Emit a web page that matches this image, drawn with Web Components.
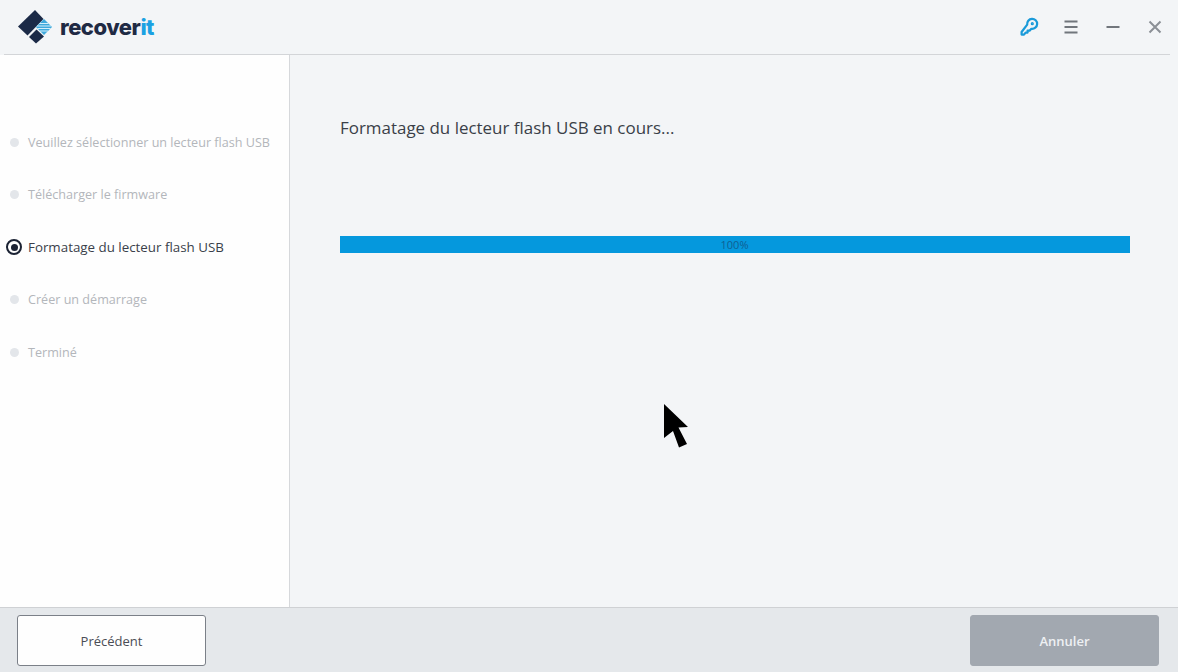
<!DOCTYPE html>
<html lang="fr">
<head>
<meta charset="utf-8">
<title>Recoverit</title>
<style>
    html, body { margin: 0; height: 100%; }
    body { font-family: "Open Sans", "Liberation Sans", sans-serif; overflow: hidden; }
</style>
</head>
<body>
<app-window>
    <app-header slot="header"></app-header>
    <step-list slot="side">
        <step-item>Veuillez sélectionner un lecteur flash USB</step-item>
        <step-item>Télécharger le firmware</step-item>
        <step-item active>Formatage du lecteur flash USB</step-item>
        <step-item>Créer un démarrage</step-item>
        <step-item>Terminé</step-item>
    </step-list>
    <progress-panel slot="main" title-text="Formatage du lecteur flash USB en cours..." value="100"></progress-panel>
    <app-footer slot="footer">
        <app-button slot="left">Précédent</app-button>
        <app-button slot="right" disabled>Annuler</app-button>
    </app-footer>
</app-window>
<mouse-pointer></mouse-pointer>

<script>
class AppWindow extends HTMLElement {
    connectedCallback() {
        this.attachShadow({ mode: 'open' });
        this.shadowRoot.innerHTML = `
            <style>
                :host {
                    display: grid;
                    grid-template-columns: 290px 1fr;
                    grid-template-rows: 55px 1fr 65px;
                    width: 1178px;
                    height: 672px;
                    background: #f3f5f7;
                }
                .header { grid-column: 1 / 3; }
                .footer { grid-column: 1 / 3; }
                .side { background: #fefefe; border-right: 1px solid #d6d8db; }
            </style>
            <div class="header"><slot name="header"></slot></div>
            <div class="side"><slot name="side"></slot></div>
            <div class="main"><slot name="main"></slot></div>
            <div class="footer"><slot name="footer"></slot></div>
        `;
    }
}

class AppHeader extends HTMLElement {
    connectedCallback() {
        this.attachShadow({ mode: 'open' });
        this.shadowRoot.innerHTML = `
            <style>
                :host {
                    display: block;
                    height: 55px;
                    box-sizing: border-box;
                    padding: 0 8px 0 4px;
                }
                .bar {
                    display: flex;
                    align-items: center;
                    justify-content: space-between;
                    height: 55px;
                    box-sizing: border-box;
                    padding: 0 5px 0 14px;
                    border-bottom: 1px solid #d3d5d8;
                }
                .logo { display: flex; align-items: center; gap: 8px; }
                .logo svg { display: block; }
                .name {
                    font-family: "Inter", "Liberation Sans", sans-serif;
                    font-weight: 800;
                    font-size: 22px;
                    letter-spacing: -0.5px;
                    color: #1f2a44;
                }
                .name b { font-weight: 800; color: #1ba1e2; }
                .icons { display: flex; align-items: center; gap: 22px; }
                .icons svg { display: block; }
            </style>
            <div class="bar">
                <div class="logo">
                    <svg width="34" height="34" viewBox="0 0 34 34">
                        <path d="M17 0 L0 16.5 L9.5 25.5 L25.5 9 Z" fill="#1b2a47"/>
                        <path d="M11 27 L18.5 19.5 L26 26.5 L18 33.5 Z" fill="#1b2a47"/>
                        <path d="M26 9 L34 17 L26 25 L18 17 Z" fill="#3fa9dc"/>
                        <path d="M21.5 13.5h9M19 16h14M19.5 18.5h13M22 21h8" stroke="#d4eefa" stroke-width="1"/>
                    </svg>
                    <span class="name">recover<b>it</b></span>
                </div>
                <div class="icons">
                    <svg width="20" height="20" viewBox="0 0 20 20" fill="none" stroke="#1a9ad9" stroke-width="2.2" stroke-linecap="round" stroke-linejoin="round">
                        <path d="M8.2 7.6 a5 5 0 1 1 4.2 4.2 L10.6 13.6 H8.6 V15.6 H6.6 L5 17.6 H2.6 V15 Z"/>
                        <circle cx="13.3" cy="6.7" r="0.9" stroke-width="1.4"/>
                    </svg>
                    <svg width="20" height="20" viewBox="0 0 20 20" stroke="#71767c" stroke-width="2">
                        <path d="M3.5 4.5h13M3.5 10h13M3.5 15.5h13"/>
                    </svg>
                    <svg width="20" height="20" viewBox="0 0 20 20" stroke="#71767c" stroke-width="2">
                        <path d="M3.5 10h13"/>
                    </svg>
                    <svg width="20" height="20" viewBox="0 0 20 20" stroke="#8b9096" stroke-width="2">
                        <path d="M4.5 4.5l11 11M15.5 4.5l-11 11"/>
                    </svg>
                </div>
            </div>
        `;
    }
}

class StepList extends HTMLElement {
    connectedCallback() {
        this.attachShadow({ mode: 'open' });
        this.shadowRoot.innerHTML = `
            <style>
                :host {
                    display: flex;
                    flex-direction: column;
                    padding-top: 61.4px;
                }
            </style>
            <slot></slot>
        `;
    }
}

class StepItem extends HTMLElement {
    connectedCallback() {
        this.attachShadow({ mode: 'open' });
        this.shadowRoot.innerHTML = `
            <style>
                :host {
                    display: flex;
                    align-items: center;
                    height: 52.4px;
                    padding-left: 6px;
                    gap: 6px;
                    font-size: 12.6px;
                    color: #b3b6bb;
                    white-space: nowrap;
                }
                :host([active]) { color: #3a3f4a; font-size: 13.35px; }
                .dot {
                    box-sizing: border-box;
                    width: 16px;
                    height: 16px;
                    display: flex;
                    align-items: center;
                    justify-content: center;
                    flex: none;
                }
                .dot::before {
                    content: '';
                    width: 9px;
                    height: 9px;
                    border-radius: 50%;
                    background: #e3e6ea;
                }
                :host([active]) .dot {
                    border: 2px solid #1b2233;
                    border-radius: 50%;
                }
                :host([active]) .dot::before { width: 7px; height: 7px; background: #1b2233; }
            </style>
            <span class="dot"></span><slot></slot>
        `;
    }
}

class ProgressPanel extends HTMLElement {
    connectedCallback() {
        const value = this.getAttribute('value');
        this.attachShadow({ mode: 'open' });
        this.shadowRoot.innerHTML = `
            <style>
                :host {
                    display: block;
                    padding: 61px 48px 0 50px;
                }
                h1 {
                    margin: 0 0 96px;
                    font-weight: 400;
                    font-size: 16.95px;
                    line-height: 24px;
                    color: #3a3f48;
                }
                .track {
                    height: 17px;
                    background: #0598dd;
                    display: flex;
                    align-items: center;
                    justify-content: center;
                    font-size: 11px;
                    color: #0f5f93;
                }
                .track span { margin-right: 1px; }
            </style>
            <h1>${this.getAttribute('title-text')}</h1>
            <div class="track"><span>${value}%</span></div>
        `;
    }
}

class AppFooter extends HTMLElement {
    connectedCallback() {
        this.attachShadow({ mode: 'open' });
        this.shadowRoot.innerHTML = `
            <style>
                :host {
                    display: flex;
                    justify-content: space-between;
                    box-sizing: border-box;
                    height: 65px;
                    padding: 7px 19px 6px 17px;
                    background: #e5e8eb;
                    border-top: 1px solid #cfd1d4;
                }
            </style>
            <slot name="left"></slot>
            <slot name="right"></slot>
        `;
    }
}

class AppButton extends HTMLElement {
    connectedCallback() {
        this.attachShadow({ mode: 'open' });
        this.shadowRoot.innerHTML = `
            <style>
                :host {
                    display: flex;
                    align-items: center;
                    justify-content: center;
                    box-sizing: border-box;
                    width: 189px;
                    height: 51px;
                    background: #fefefe;
                    border: 1px solid #7b8088;
                    border-radius: 3px;
                    font-size: 13px;
                    color: #4a4d55;
                }
                :host([disabled]) {
                    background: #a2a8b0;
                    border-color: #a2a8b0;
                    color: #eef0f3;
                    font-weight: 600;
                }
            </style>
            <slot></slot>
        `;
    }
}

class MousePointer extends HTMLElement {
    connectedCallback() {
        this.attachShadow({ mode: 'open' });
        this.shadowRoot.innerHTML = `
            <style>
                :host {
                    position: absolute;
                    left: 664px;
                    top: 404px;
                    width: 25px;
                    height: 44px;
                }
            </style>
            <svg width="25" height="44" viewBox="0 0 25 44">
                <path d="M0 0 L24 23 L14.5 23.5 L23 40 L15 43.5 L9 27 L0 34 Z" fill="#000"/>
            </svg>
        `;
    }
}

customElements.define('app-window', AppWindow);
customElements.define('app-header', AppHeader);
customElements.define('step-list', StepList);
customElements.define('step-item', StepItem);
customElements.define('progress-panel', ProgressPanel);
customElements.define('app-footer', AppFooter);
customElements.define('app-button', AppButton);
customElements.define('mouse-pointer', MousePointer);
</script>
</body>
</html>
